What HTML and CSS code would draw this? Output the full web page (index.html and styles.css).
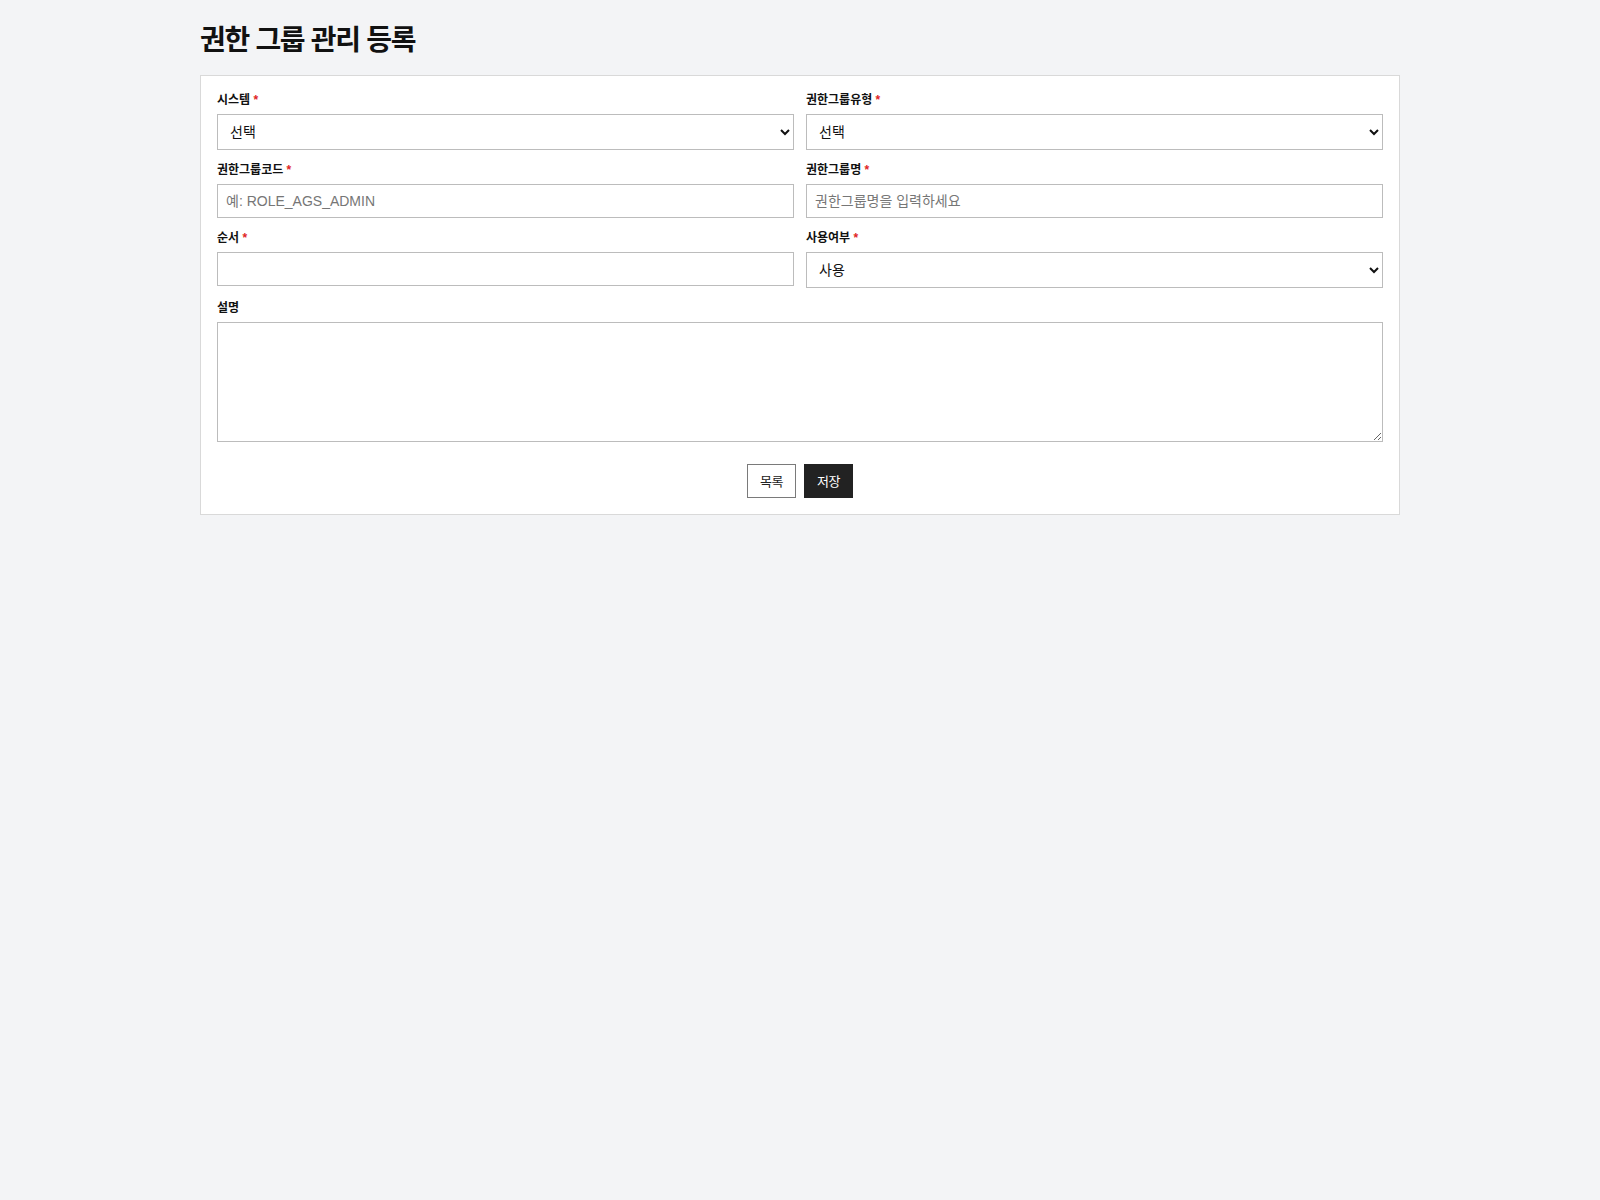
FILE: index.html
```html
<!DOCTYPE html>
<html lang="ko">
<head>
<meta charset="utf-8">
<title>권한 그룹 관리 등록</title>
<link rel="stylesheet" href="styles.css">
</head>
<body>
<div class="page">
  <h1 class="page-title">권한 그룹 관리 등록</h1>
  <form class="card">
    <div class="form-grid">
      <div class="field">
        <label class="label">시스템 <span class="req">*</span></label>
        <select class="control select"><option>선택</option></select>
      </div>
      <div class="field">
        <label class="label">권한그룹유형 <span class="req">*</span></label>
        <select class="control select"><option>선택</option></select>
      </div>
      <div class="field">
        <label class="label">권한그룹코드 <span class="req">*</span></label>
        <input class="control input" type="text" placeholder="예: ROLE_AGS_ADMIN">
      </div>
      <div class="field">
        <label class="label">권한그룹명 <span class="req">*</span></label>
        <input class="control input" type="text" placeholder="권한그룹명을 입력하세요">
      </div>
      <div class="field">
        <label class="label">순서 <span class="req">*</span></label>
        <input class="control input" type="text">
      </div>
      <div class="field">
        <label class="label">사용여부 <span class="req">*</span></label>
        <select class="control select"><option>사용</option><option>미사용</option></select>
      </div>
      <div class="field field-wide">
        <label class="label">설명</label>
        <textarea class="control textarea"></textarea>
      </div>
    </div>
    <div class="actions">
      <button type="button" class="btn btn-outline">목록</button>
      <button type="button" class="btn btn-dark">저장</button>
    </div>
  </form>
</div>
</body>
</html>
```
FILE: styles.css
```css
html, body {
  margin: 0;
  padding: 0;
  background: #f3f4f6;
  font-family: "Liberation Sans", "Noto Sans CJK KR", sans-serif;
  color: #111;
}

.page {
  width: 1200px;
  margin: 0 auto;
  padding-top: 21px;
}

.page-title {
  margin: 0 0 14px;
  font-size: 28px;
  line-height: 40px;
  font-weight: 700;
  letter-spacing: -1.3px;
  color: #111;
}

.card {
  background: #fff;
  border: 1px solid #d9d9d9;
  padding: 16px;
}

.form-grid {
  display: grid;
  grid-template-columns: 1fr 1fr;
  column-gap: 12px;
  row-gap: 12px;
}

.field {
  display: flex;
  flex-direction: column;
  min-width: 0;
}

.field-wide {
  grid-column: 1 / span 2;
}

.label {
  display: block;
  font-size: 12px;
  line-height: 16px;
  font-weight: 700;
  letter-spacing: 0;
  margin-bottom: 6px;
  color: #111;
}

.req {
  color: #e02424;
}

.control {
  box-sizing: border-box;
  width: 100%;
  border: 1px solid #bcbcbc;
  border-radius: 0;
  background: #fff;
  font-family: "Liberation Sans", "Noto Sans CJK KR", sans-serif;
  font-size: 14px;
  color: #111;
  margin: 0;
  outline: none;
}

.select {
  height: 36px;
  padding: 0 8px;
}

.input {
  height: 34px;
  padding: 0 8px;
}

.input::placeholder {
  color: #767676;
}

.textarea {
  height: 120px;
  padding: 8px;
  resize: vertical;
  display: block;
}

.actions {
  display: flex;
  justify-content: center;
  gap: 8px;
  margin-top: 22px;
}

.btn {
  box-sizing: border-box;
  height: 34px;
  padding: 0 12px 2px;
  font-family: "Liberation Sans", "Noto Sans CJK KR", sans-serif;
  font-size: 13px;
  letter-spacing: -0.5px;
  border-radius: 0;
  cursor: pointer;
}

.btn-outline {
  background: #fff;
  border: 1px solid #7a7a7a;
  color: #222;
}

.btn-dark {
  background: #222;
  border: 1px solid #222;
  color: #fff;
}
```
